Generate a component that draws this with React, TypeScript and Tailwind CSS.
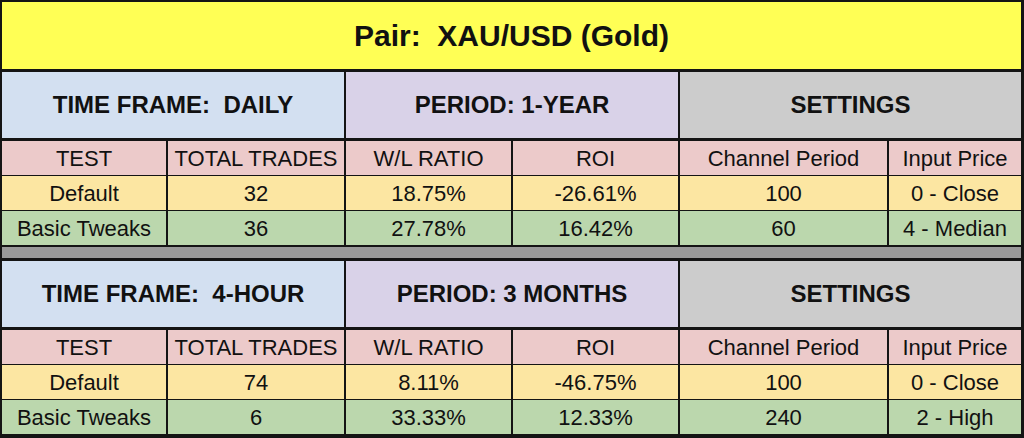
const cols = ['TEST', 'TOTAL TRADES', 'W/L RATIO', 'ROI', 'Channel Period', 'Input Price'];

const sections = [
  {
    frame: 'TIME FRAME:  DAILY',
    period: 'PERIOD: 1-YEAR',
    rows: [
      ['Default', '32', '18.75%', '-26.61%', '100', '0 - Close'],
      ['Basic Tweaks', '36', '27.78%', '16.42%', '60', '4 - Median'],
    ],
  },
  {
    frame: 'TIME FRAME:  4-HOUR',
    period: 'PERIOD: 3 MONTHS',
    rows: [
      ['Default', '74', '8.11%', '-46.75%', '100', '0 - Close'],
      ['Basic Tweaks', '6', '33.33%', '12.33%', '240', '2 - High'],
    ],
  },
];

const grid = 'grid grid-cols-[164px_176px_165px_165px_207px_132px] gap-x-[2px]';
const cell = 'flex items-center justify-center whitespace-pre';

function Section({ frame, period, rows }: { frame: string; period: string; rows: string[][] }) {
  return (
    <div className="flex flex-col">
      <div className={`${grid} h-[66px] text-[24px] font-bold`}>
        <div className={`${cell} col-span-2 bg-[#d3e0f1]`}>{frame}</div>
        <div className={`${cell} col-span-2 bg-[#d9d2e8]`}>{period}</div>
        <div className={`${cell} col-span-2 bg-[#cccccc]`}>SETTINGS</div>
      </div>
      <div className={`${grid} mt-[3px] h-[33px] text-[22px]`}>
        {cols.map((c) => (
          <div key={c} className={`${cell} pt-[1px] bg-[#eccaca]`}>{c}</div>
        ))}
      </div>
      {rows.map((r, i) => (
        <div key={i} className={`${grid} mt-[2px] h-[33px] text-[22px]`}>
          {r.map((v, j) => (
            <div key={j} className={`${cell} pt-[1px] ${i === 0 ? 'bg-[#fce6a2]' : 'bg-[#bbd7ad]'}`}>
              {v}
            </div>
          ))}
        </div>
      ))}
    </div>
  );
}

export default function App() {
  return (
    <div
      className="w-[1024px] h-[438px] bg-[#141414] pt-[2px] pl-[2px] pr-[3px] pb-[3px] flex flex-col text-[#111]"
      style={{ fontFamily: '"Liberation Sans", Arial, sans-serif' }}
    >
      <div className="h-[67px] flex items-center justify-center bg-[#ffff55] text-[30px] font-bold whitespace-pre">
        Pair:  XAU/USD (Gold)
      </div>
      <div className="mt-[3px]">
        <Section {...sections[0]} />
      </div>
      <div className="mt-[3px] h-[11px] bg-[#999999]" />
      <div className="mt-[3px]">
        <Section {...sections[1]} />
      </div>
    </div>
  );
}
